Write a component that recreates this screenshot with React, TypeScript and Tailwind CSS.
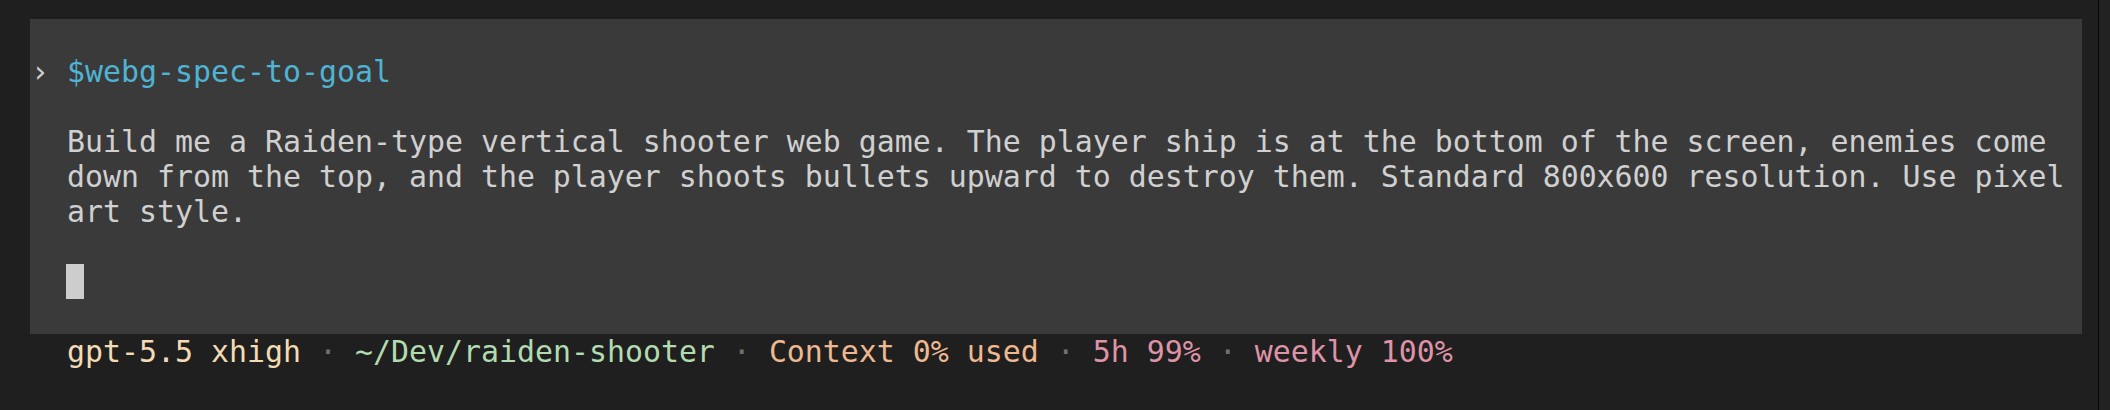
import type { ReactNode } from 'react';

const mono = "font-['DejaVu_Sans_Mono','Liberation_Mono',monospace]";

function Row({ children }: { children?: ReactNode }) {
  return <div className="h-[35px] whitespace-pre pl-[1px]">{children}</div>;
}

const Dot = () => <span className="text-[#707070]"> · </span>;

export default function App() {
  const prompt = [
    'Build me a Raiden-type vertical shooter web game. The player ship is at the bottom of the screen, enemies come',
    'down from the top, and the player shoots bullets upward to destroy them. Standard 800x600 resolution. Use pixel',
    'art style.',
  ];

  return (
    <div className={`flex h-[410px] w-[2110px] overflow-hidden bg-[#1f1f1f] ${mono} text-[29.9px] leading-[35px] text-[#d0d0d0]`}>
      <div className="flex w-[2098px] flex-col pt-[19px]">
        {/* composer panel */}
        <div className="ml-[30px] w-[2052px] bg-[#3a3a3a]">
          <Row />
          <Row>
            <span className="text-[#cfcfcf]">›</span> <span className="text-[#4fb3d3]">$webg-spec-to-goal</span>
          </Row>
          <Row />
          {prompt.map((line) => (
            <Row key={line}>{'  ' + line}</Row>
          ))}
          <Row />
          <div className="flex h-[35px] items-start pl-[36px]">
            <span className="block h-[35px] w-[18px] bg-[#cdcdcd]" />
          </div>
          <Row />
        </div>

        {/* status line */}
        <div className="ml-[30px] h-[35px] whitespace-pre pl-[1px]">
          {'  '}
          <span className="text-[#f3dbb5]">gpt-5.5 xhigh</span>
          <Dot />
          <span className="text-[#b3dbb0]">~/Dev/raiden-shooter</span>
          <Dot />
          <span className="text-[#eeb891]">Context 0% used</span>
          <Dot />
          <span className="text-[#df93a7]">5h 99%</span>
          <Dot />
          <span className="text-[#df93a7]">weekly 100%</span>
        </div>
      </div>
      <div className="w-px bg-[#050505]" />
      <div className="flex-1 bg-[#222222]" />
    </div>
  );
}
